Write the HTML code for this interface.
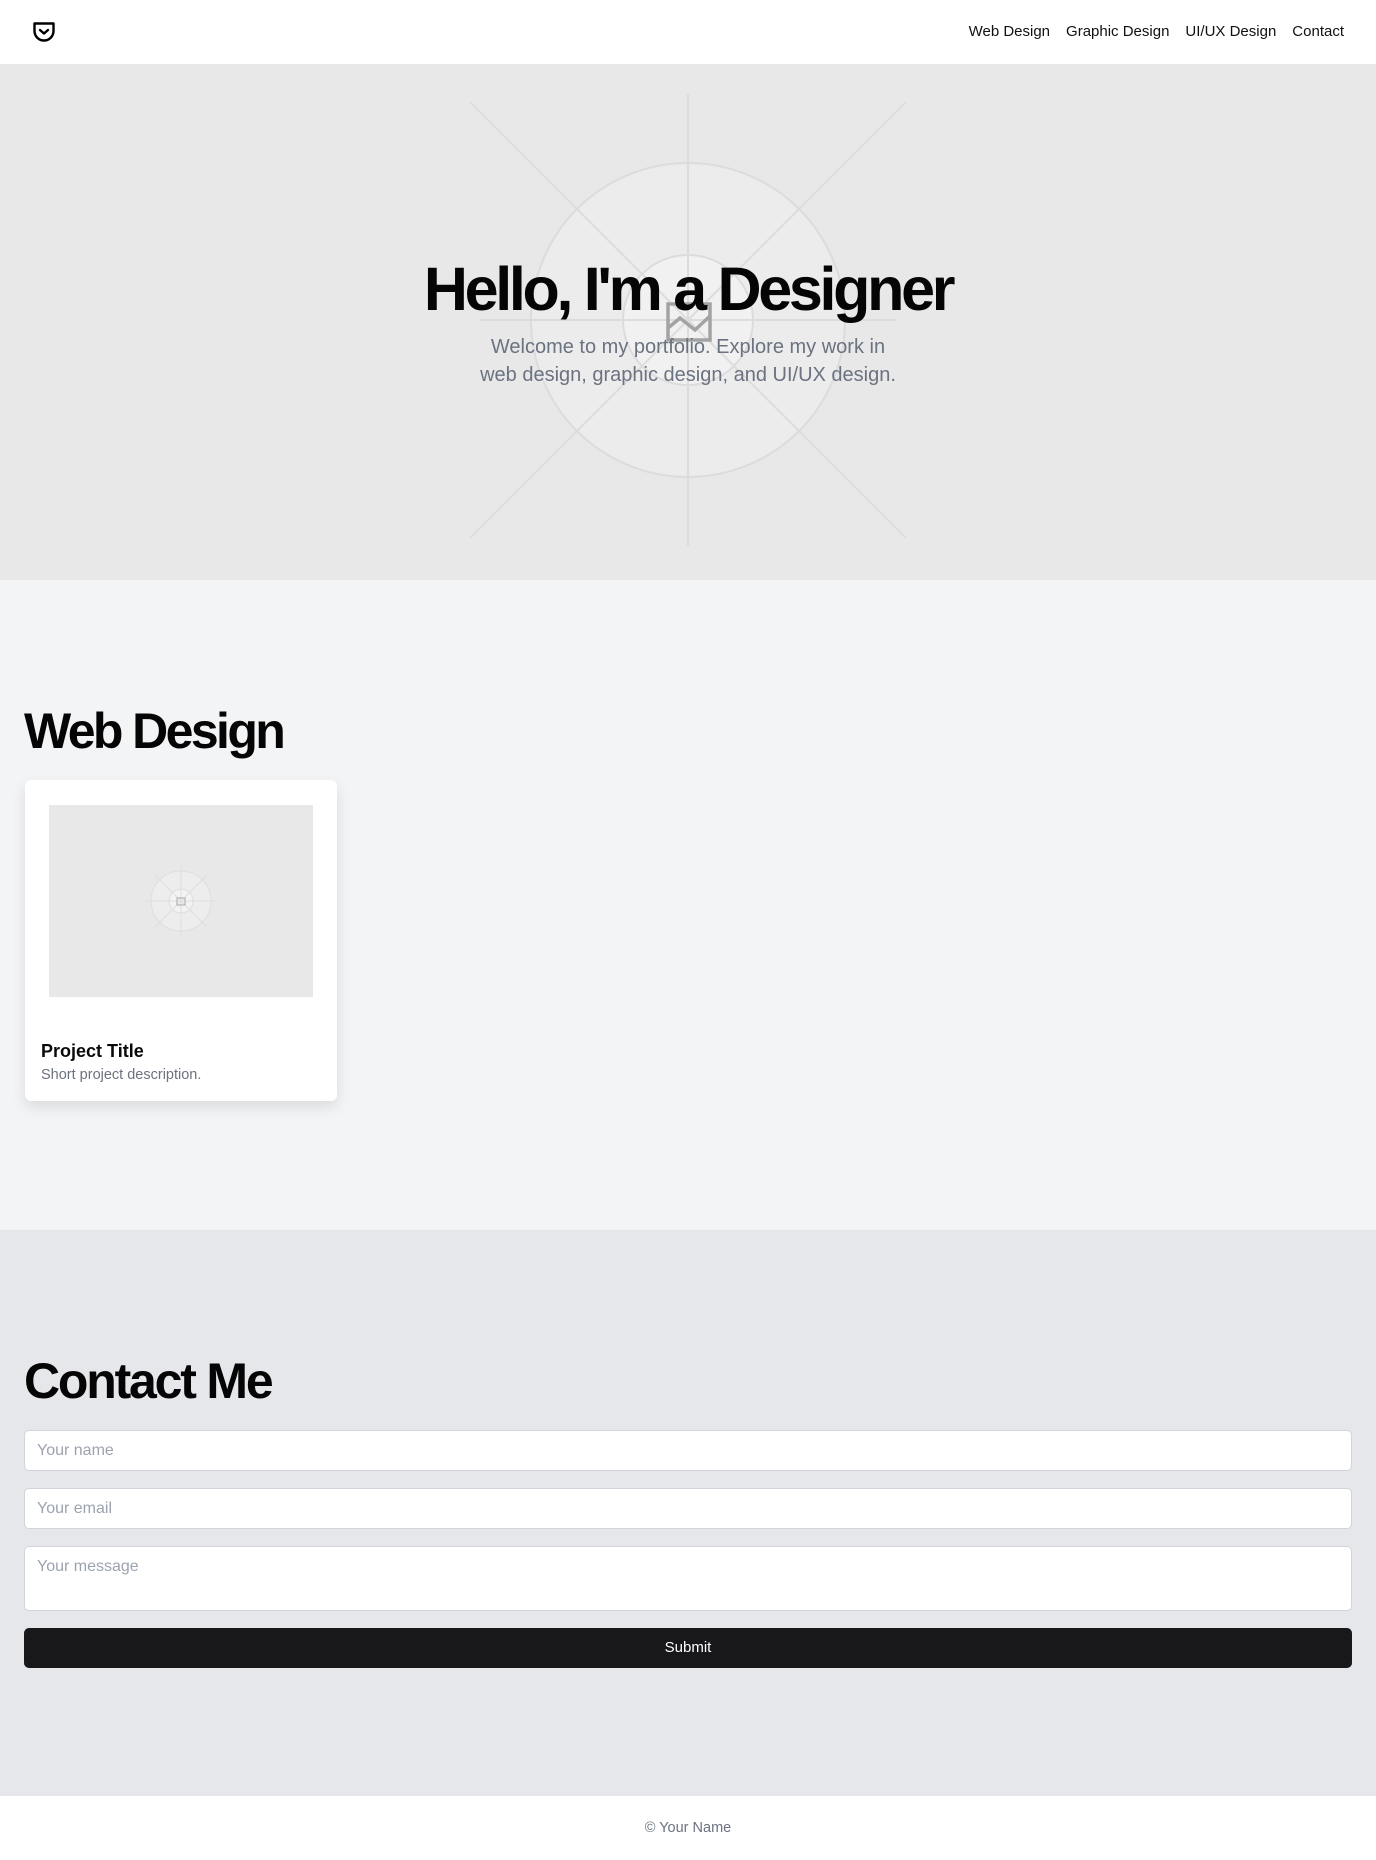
<!DOCTYPE html>
<html><head><meta charset="utf-8"><style>
*{box-sizing:border-box;margin:0;padding:0}
body{width:1376px;height:1860px;font-family:"Liberation Sans",sans-serif;background:#fff;color:#0a0a0a;position:relative;overflow:hidden}
nav{position:absolute;top:0;left:0;width:1376px;height:64px;background:#fff}
.links{position:absolute;right:32px;top:23px;font-size:15px;color:#111;display:flex;gap:16px}
.hero{position:absolute;top:64px;left:0;width:1376px;height:516px;background:#e8e8e8;overflow:hidden}
.hero h1{position:absolute;top:190px;left:0;width:1376px;text-align:center;font-size:61px;font-weight:bold;letter-spacing:-3.3px;color:#050505}
.hero p{position:absolute;top:269px;left:463px;width:450px;text-align:center;font-size:20px;line-height:28px;color:#6b7280}
.s2{position:absolute;top:580px;left:0;width:1376px;height:650px;background:#f3f4f6}
h2{position:absolute;left:24px;font-size:50px;font-weight:bold;letter-spacing:-2.6px;color:#050505}
.card{position:absolute;left:25px;top:200px;width:312px;height:321px;background:#fff;border-radius:6px;box-shadow:0 6px 14px rgba(0,0,0,.1)}
.img{position:absolute;left:24px;top:25px;width:264px;height:192px;background:#e8e8e8}
.card b{position:absolute;left:16px;top:261px;font-size:18px}
.card span{position:absolute;left:16px;top:287px;font-size:14.5px;color:#6b7280}
.s3{position:absolute;top:1230px;left:0;width:1376px;height:566px;background:#e5e7eb}
.in{position:absolute;left:24px;width:1328px;background:#fff;border:1px solid #d1d5db;border-radius:5px;font-size:16px;color:#9ca3af;padding:11px 12px}
.btn{position:absolute;left:24px;top:398px;width:1328px;height:40px;background:#18181b;border-radius:5px;color:#fff;font-size:15px;text-align:center;line-height:40px}
footer{position:absolute;top:1796px;left:0;width:1376px;height:64px;background:#fff;text-align:center;font-size:14.5px;color:#6b7280;line-height:64px}
</style></head><body>
<nav>
<svg style="position:absolute;left:32px;top:21px" width="24" height="22" viewBox="0 0 24 22"><path d="M2.5 2.5H21.5V10A9.5 9.5 0 0 1 2.5 10Z" fill="none" stroke="#000" stroke-width="2.4" stroke-linejoin="round"/><path d="M8 9L12 12.5L16 9" fill="none" stroke="#000" stroke-width="2.4" stroke-linecap="round" stroke-linejoin="round"/></svg>
<div class="links"><span>Web Design</span><span>Graphic Design</span><span>UI/UX Design</span><span>Contact</span></div>
</nav>
<div class="hero">
<svg style="position:absolute;left:0;top:0" width="1376" height="516">
<g stroke="#dcdcdc" stroke-width="2" fill="none">
<circle cx="688" cy="256" r="157" fill="#ececec"/>
<circle cx="688" cy="256" r="65" fill="#f1f1f1"/>
<line x1="688" y1="30" x2="688" y2="482"/>
<line x1="470" y1="38" x2="906" y2="474"/>
<line x1="906" y1="38" x2="470" y2="474"/>
<line x1="480" y1="256" x2="896" y2="256"/>
</g>
<g stroke="#a3a3a3" stroke-width="3.5" fill="none"><rect x="668" y="240" width="42" height="36"/><path d="M668 264L680 254L695 266L710 252"/></g>
</svg>
<h1>Hello, I'm a Designer</h1>
<p>Welcome to my portfolio. Explore my work in<br>web design, graphic design, and UI/UX design.</p>
</div>
<div class="s2">
<h2 style="top:122px">Web Design</h2>
<div class="card"><div class="img">
<svg width="264" height="192"><g stroke="#dedede" stroke-width="1" fill="none"><circle cx="132" cy="96" r="30" fill="#ededed"/><circle cx="132" cy="96" r="12" fill="#f3f3f3"/><line x1="132" y1="60" x2="132" y2="132"/><line x1="96" y1="96" x2="168" y2="96"/><line x1="106" y1="70" x2="158" y2="122"/><line x1="158" y1="70" x2="106" y2="122"/></g><rect x="128" y="93" width="8" height="7" fill="none" stroke="#aaa"/></svg>
</div><b>Project Title</b><span>Short project description.</span></div>
</div>
<div class="s3">
<h2 style="top:122px;letter-spacing:-2.2px">Contact Me</h2>
<div class="in" style="top:200px;height:41px">Your name</div>
<div class="in" style="top:258px;height:41px">Your email</div>
<div class="in" style="top:316px;height:65px">Your message</div>
<div class="btn">Submit</div>
</div>
<footer>© Your Name</footer>
</body></html>
